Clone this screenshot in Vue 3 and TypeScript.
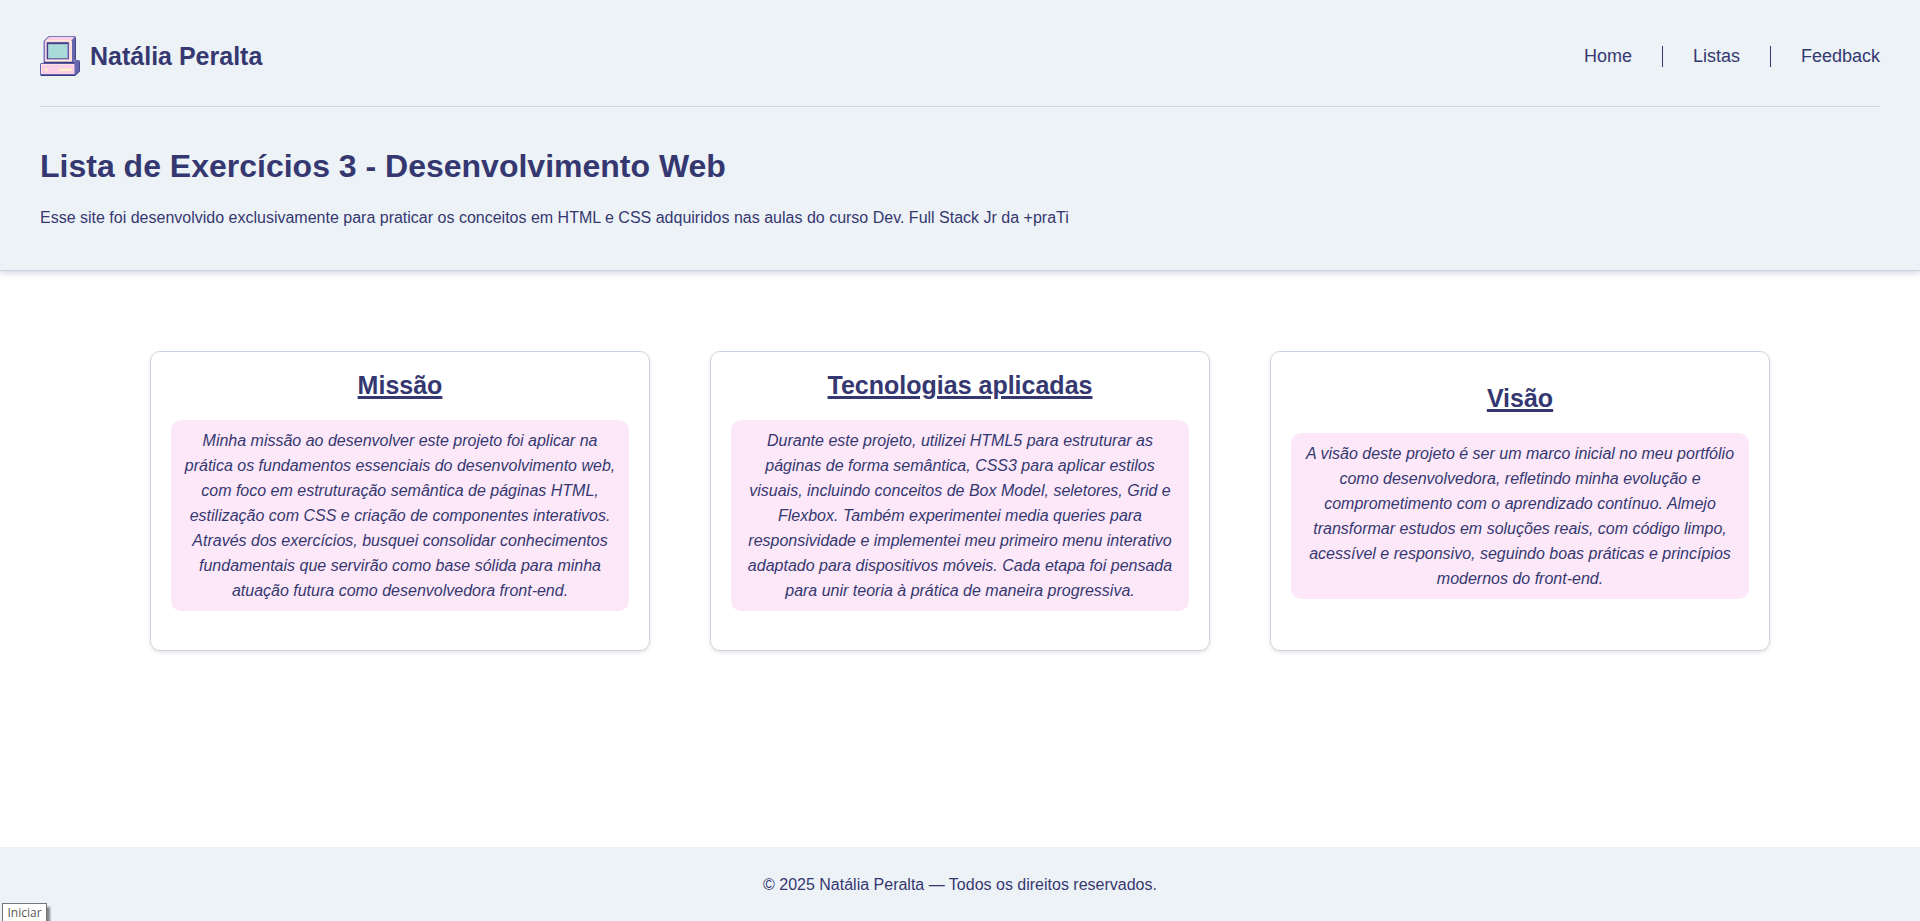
<script setup lang="ts">
interface Card {
  title: string
  lines: string[]
}

const links: string[] = ['Home', 'Listas', 'Feedback']

const cards: Card[] = [
  {
    title: 'Missão',
    lines: [
      'Minha missão ao desenvolver este projeto foi aplicar na',
      'prática os fundamentos essenciais do desenvolvimento web,',
      'com foco em estruturação semântica de páginas HTML,',
      'estilização com CSS e criação de componentes interativos.',
      'Através dos exercícios, busquei consolidar conhecimentos',
      'fundamentais que servirão como base sólida para minha',
      'atuação futura como desenvolvedora front-end.',
    ],
  },
  {
    title: 'Tecnologias aplicadas',
    lines: [
      'Durante este projeto, utilizei HTML5 para estruturar as',
      'páginas de forma semântica, CSS3 para aplicar estilos',
      'visuais, incluindo conceitos de Box Model, seletores, Grid e',
      'Flexbox. Também experimentei media queries para',
      'responsividade e implementei meu primeiro menu interativo',
      'adaptado para dispositivos móveis. Cada etapa foi pensada',
      'para unir teoria à prática de maneira progressiva.',
    ],
  },
  {
    title: 'Visão',
    lines: [
      'A visão deste projeto é ser um marco inicial no meu portfólio',
      'como desenvolvedora, refletindo minha evolução e',
      'comprometimento com o aprendizado contínuo. Almejo',
      'transformar estudos em soluções reais, com código limpo,',
      'acessível e responsivo, seguindo boas práticas e princípios',
      'modernos do front-end.',
    ],
  },
]
</script>

<template>
  <div class="page">
    <header class="header">
      <div class="topbar">
        <div class="brand">
          <svg class="logo" viewBox="0 0 40 40" aria-hidden="true">
            <path d="M3.5 5 8.5 0H35L36 1V24L33 27H3.5Z" fill="#7b79ba" />
            <path d="M9 1H34L31 5H5Z" fill="#fbcfe8" />
            <path d="M32 5 35 2V23L32 26Z" fill="#6466ae" />
            <path d="M35.5 2V24" stroke="#45468c" stroke-width="1" />
            <path d="M5 5H32V26H5Z" fill="#fbd3e6" />
            <path d="M6 4.7H31" stroke="#fff0d0" stroke-width="1" />
            <path d="M31 5V25M6 24.5H31" stroke="#fff0d0" stroke-width="1" />
            <rect x="6.5" y="6" width="22.5" height="17.5" fill="#8583be" />
            <rect x="7" y="6.5" width="21.5" height="16.5" fill="#3f4080" />
            <rect x="8" y="8" width="20" height="14.5" fill="#9a9cce" />
            <rect x="8.5" y="8.5" width="18.5" height="13.5" fill="#a9dcd8" />
            <path d="M1 27H4V26H34L36 24H39L40 25V35L35 40H1L0 39V28Z" fill="#6466ae" />
            <path d="M4 26.5H34" stroke="#3a3b7a" stroke-width="1.5" />
            <path d="M39.5 26V35" stroke="#45468c" stroke-width="1" />
            <rect x="1" y="28" width="33.5" height="10" fill="#fbcfe8" />
            <path d="M1.5 38V28.5H33" fill="none" stroke="#fde0e0" stroke-width="1" />
            <path d="M1 39.5H35L39.5 35" fill="none" stroke="#3a3b7a" stroke-width="1" />
            <rect x="5" y="32.5" width="2.5" height="2.5" fill="#ffefc6" />
            <rect x="19" y="32.5" width="12.5" height="2.5" fill="#ffefc6" />
          </svg>
          <span class="brand-name">Natália Peralta</span>
        </div>
        <nav class="nav">
          <a v-for="link in links" :key="link" class="nav-link">{{ link }}</a>
        </nav>
      </div>
      <h1 class="heading">Lista de Exercícios 3 - Desenvolvimento Web</h1>
      <p class="intro">
        Esse site foi desenvolvido exclusivamente para praticar os conceitos em HTML e CSS adquiridos nas aulas do curso Dev. Full Stack Jr da +praTi
      </p>
    </header>

    <main class="main">
      <section v-for="card in cards" :key="card.title" class="card">
        <h2 class="card-title">{{ card.title }}</h2>
        <p class="card-text">
          <span v-for="line in card.lines" :key="line" class="line">{{ line }}</span>
        </p>
      </section>
    </main>

    <footer class="footer">© 2025 Natália Peralta — Todos os direitos reservados.</footer>
    <div class="tooltip">Iniciar</div>
  </div>
</template>

<style>
body {
  margin: 0;
  overflow: hidden;
}
</style>

<style scoped>
.page {
  position: relative;
  display: flex;
  flex-direction: column;
  height: 921px;
  overflow: hidden;
  background: #fff;
  color: #353870;
  font-family: "Liberation Sans", Arial, sans-serif;
  font-size: 16px;
  line-height: 25px;
}

.header {
  box-sizing: border-box;
  height: 271px;
  padding: 0 40px;
  background: #edf2f7;
  border-bottom: 1px solid #cbd5e1;
  box-shadow: 0 2px 6px rgba(51, 54, 112, 0.22);
}

.topbar {
  box-sizing: border-box;
  display: flex;
  align-items: center;
  justify-content: space-between;
  height: 107px;
  padding-top: 6px;
  border-bottom: 1px solid #cbd5e1;
}

.brand {
  display: flex;
  align-items: center;
  gap: 10px;
}

.logo {
  display: block;
  width: 40px;
  height: 40px;
}

.brand-name {
  font-size: 25px;
  font-weight: 700;
}

.nav {
  display: flex;
  align-items: center;
}

.nav-link {
  font-size: 18px;
  line-height: 21px;
}

.nav-link + .nav-link {
  margin-left: 30px;
  padding-left: 30px;
  border-left: 1px solid #353870;
}

.heading {
  margin: 39px 0 0;
  font-size: 32px;
  line-height: 40px;
  font-weight: 700;
}

.intro {
  margin: 19px 0 0;
}

.main {
  flex: 1;
  display: flex;
  justify-content: center;
  align-items: flex-start;
  gap: 60px;
  padding-top: 80px;
}

.card {
  box-sizing: border-box;
  display: flex;
  flex-direction: column;
  justify-content: center;
  width: 500px;
  height: 300px;
  padding: 0 20px 20px;
  border: 1px solid #cbd5e1;
  border-radius: 10px;
  box-shadow: 0 2px 4px rgba(0, 0, 0, 0.1);
  text-align: center;
}

.card-title {
  margin: 0 0 20px;
  font-size: 25px;
  line-height: 29px;
  text-decoration: underline;
  text-decoration-thickness: 3px;
  text-underline-offset: 2px;
}

.card-text {
  margin: 0;
  padding: 8px;
  border-radius: 10px;
  background: #fde8f9;
  font-style: italic;
}

.line {
  display: block;
  white-space: nowrap;
}

.footer {
  box-sizing: border-box;
  height: 74px;
  padding-top: 25px;
  background: #edf2f7;
  text-align: center;
}

.tooltip {
  position: absolute;
  left: 2px;
  top: 903px;
  box-sizing: border-box;
  width: 45px;
  height: 20px;
  border: 1px solid #767676;
  background: #fff;
  box-shadow: 3px 4px 2px rgba(0, 0, 0, 0.45);
  color: #575757;
  font-family: "Open Sans", sans-serif;
  font-size: 12px;
  line-height: 18px;
  text-align: center;
}
</style>
